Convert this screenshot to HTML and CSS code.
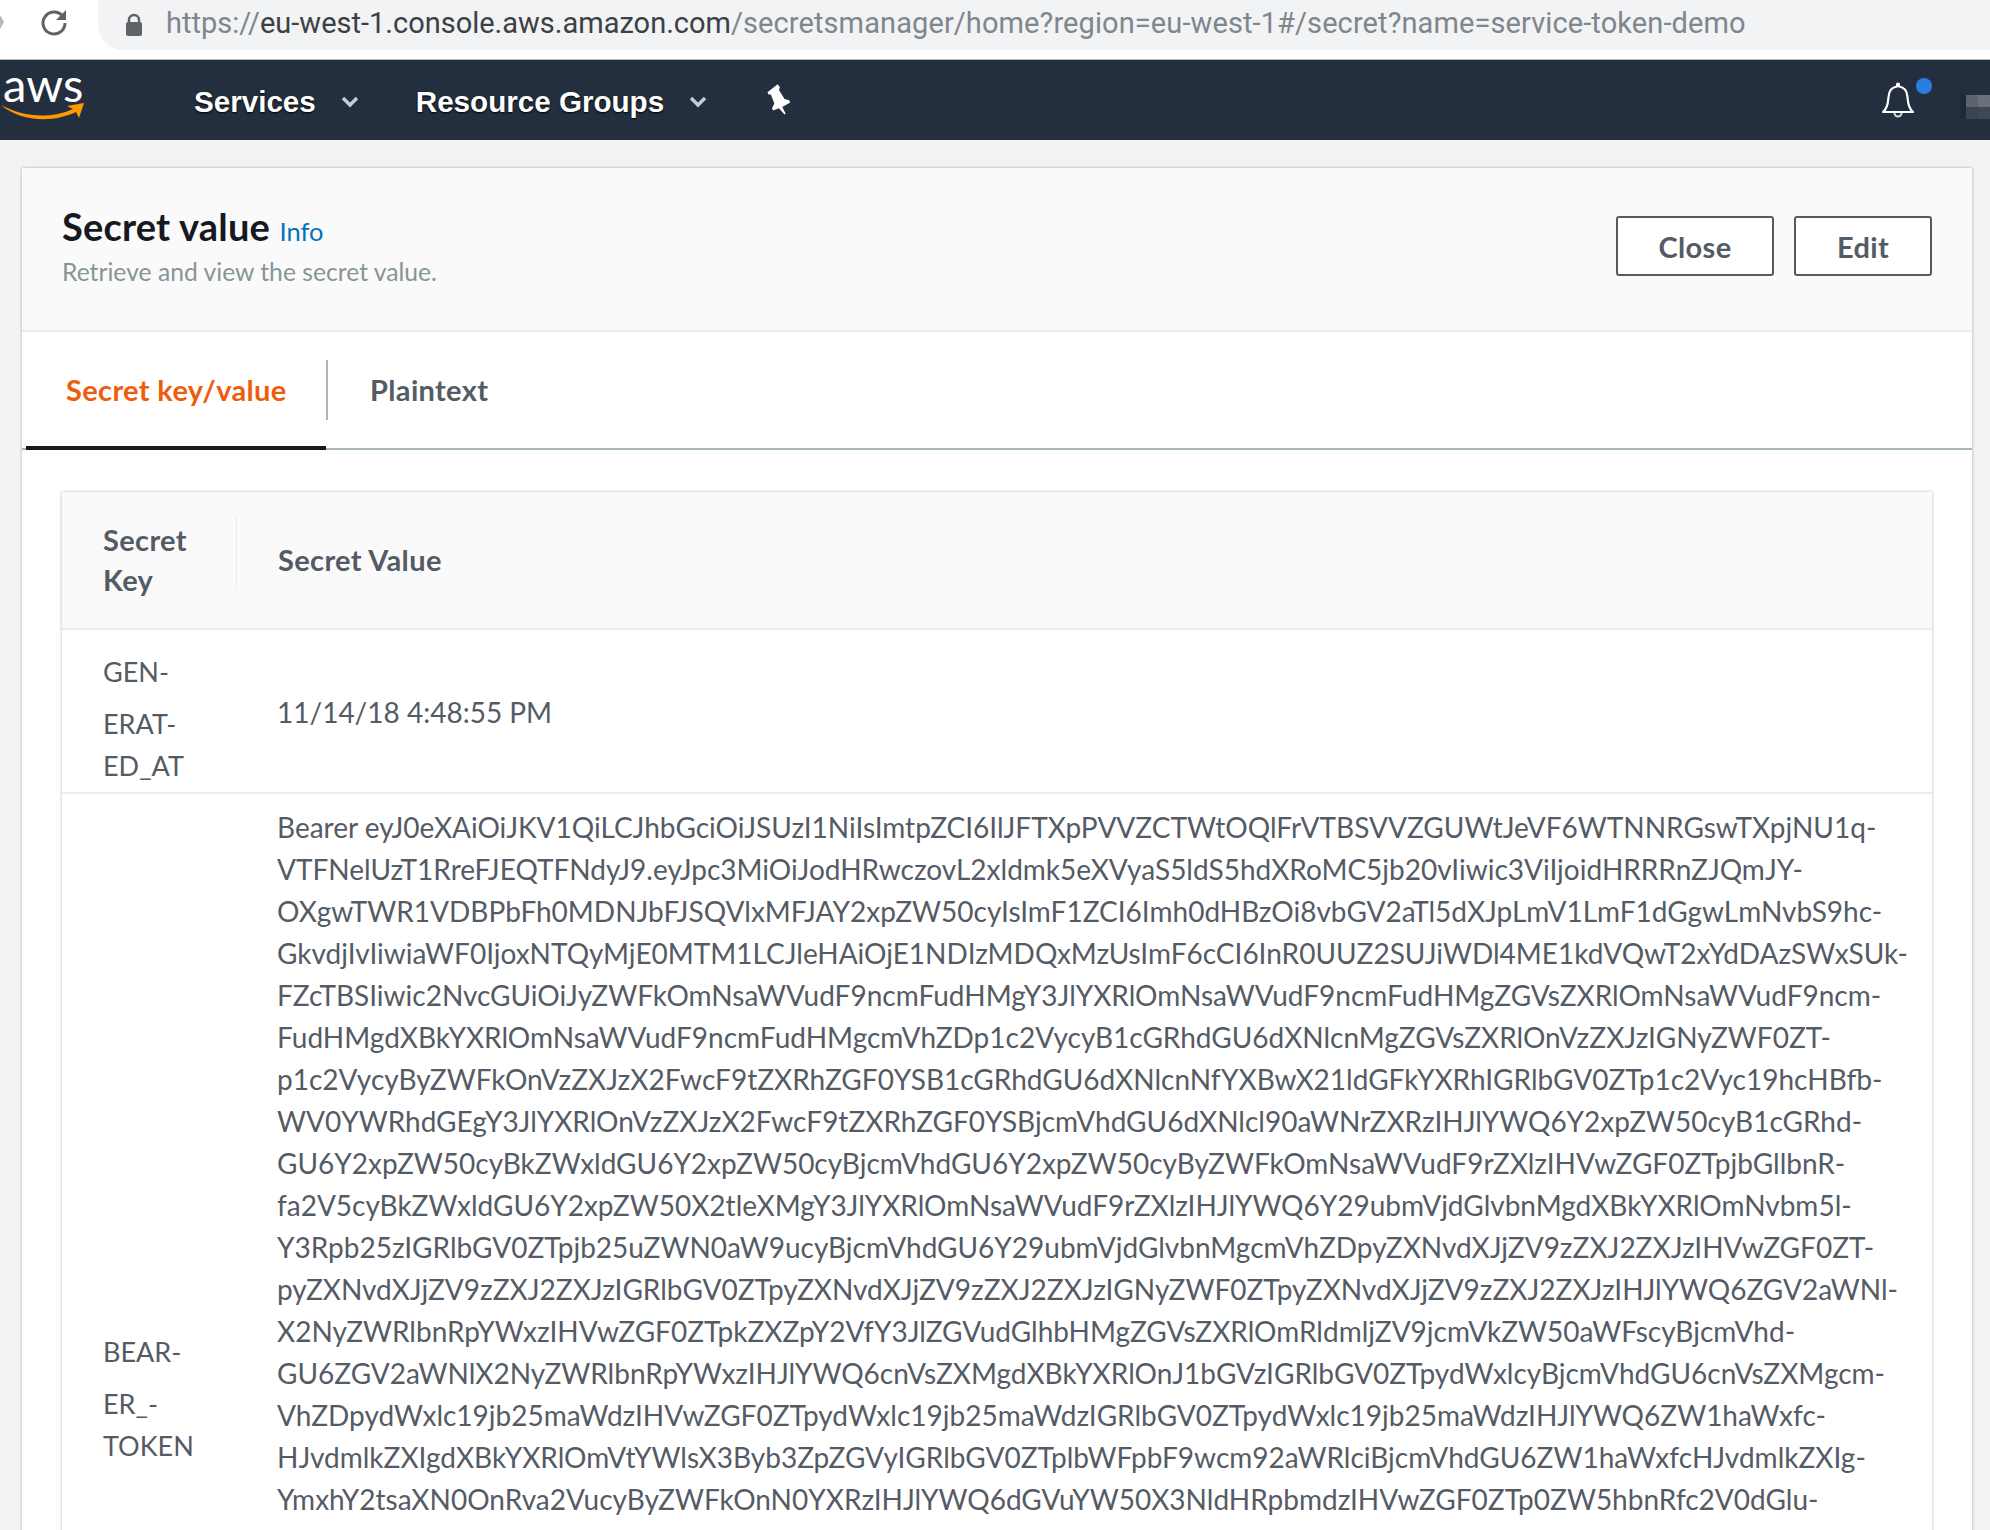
FILE: index.html
```html
<!DOCTYPE html>
<html lang="en">
<head>
    <meta charset="UTF-8">
    <meta name="viewport" content="width=device-width, initial-scale=1.0">
    <title>Secret value</title>
    <link rel="stylesheet" href="styles.css">
</head>
<body>
    <!-- browser toolbar -->
    <div class="toolbar">
        <svg class="back-stub" width="4" height="14" viewBox="0 0 4 14"><path d="M0 0 L4 7 L0 14 Z" fill="#b5b7ba"/></svg>
        <svg class="reload" width="30" height="30" viewBox="0 0 30 30">
            <path d="M24.5 10.5 A11 11 0 1 0 26 16" fill="none" stroke="#5f6368" stroke-width="3"/>
            <path d="M27 3 L27 13 L17 13 Z" fill="#5f6368"/>
        </svg>
        <div class="url-bar">
            <svg class="lock" width="18" height="24" viewBox="0 0 18 24">
                <path d="M4 10 V7 A5 5 0 0 1 14 7 V10" fill="none" stroke="#5f6368" stroke-width="2.4"/>
                <rect x="1" y="9" width="16" height="14" rx="2" fill="#5f6368"/>
            </svg>
            <span class="url"><span class="url-host"><span class="url-scheme">https://</span>eu-west-1.console.aws.amazon.com</span>/secretsmanager/home?region=eu-west-1#/secret?name=service-token-demo</span>
        </div>
    </div>

    <!-- console nav -->
    <header class="nav">
        <div class="logo">
            <span class="logo-text">aws</span>
            <svg class="logo-smile" width="84" height="18" viewBox="0 0 84 18">
                <path d="M0 2 C20 13 48 17 72 6 L66 3 L83 0 L78 15 L75 9 C52 20 20 19 0 2 Z" fill="#f90"/>
            </svg>
        </div>
        <div class="nav-item">Services
            <svg class="caret" width="18" height="12" viewBox="0 0 18 12"><path d="M2 2 L9 9 L16 2" fill="none" stroke="#c9ccd0" stroke-width="3.4"/></svg>
        </div>
        <div class="nav-item">Resource Groups
            <svg class="caret" width="18" height="12" viewBox="0 0 18 12"><path d="M2 2 L9 9 L16 2" fill="none" stroke="#c9ccd0" stroke-width="3.4"/></svg>
        </div>
        <svg class="pin" width="30" height="32" viewBox="0 0 26 28">
            <path d="M2 8 L11 1 L13 4 L12 6 L17 14 L21 15 L22 17 L15 21 L18 27 L17 27.5 L12 22 L7 24 L6 22 L8 18 L5 10 L3 10 Z" fill="#fff"/>
        </svg>
        <div class="nav-right">
            <div class="bell-wrap">
                <svg width="34" height="36" viewBox="0 0 34 36">
                    <path d="M2 30 C7 26 7 20 7.500 15 C8 8 12 5 16 4.500 L16 2.500 A1 1 0 0 1 18 2.500 L18 4.500 C22 5 26 8 26.500 15 C27 20 27 26 32 30 Z" fill="none" stroke="#fff" stroke-width="2.200" stroke-linejoin="round"/>
                    <path d="M13.500 31 A3.500 3.500 0 0 0 20.500 31" fill="none" stroke="#d5dbdb" stroke-width="2"/>
                </svg>
                <span class="bell-dot"></span>
            </div>
            <div class="blurred-account">
                <span class="px px-a"></span><span class="px px-b"></span>
                <span class="px px-c"></span><span class="px px-d"></span>
            </div>
        </div>
    </header>

    <main class="page">
        <section class="card">
            <div class="card-head">
                <div>
                    <h1 class="card-title">Secret value <a class="info">Info</a></h1>
                    <p class="card-sub">Retrieve and view the secret value.</p>
                </div>
                <div class="actions">
                    <button class="btn btn-close">Close</button>
                    <button class="btn btn-edit">Edit</button>
                </div>
            </div>

            <div class="tabs">
                <div class="tab active">Secret key/value</div>
                <div class="tab">Plaintext</div>
            </div>

            <div class="table-wrap">
                <div class="secret-table">
                    <div class="row row-head">
                        <div class="cell-key th-key">Secret<br>Key</div>
                        <div class="cell-value th-value">Secret Value</div>
                    </div>
                    <div class="row row-date">
                        <div class="cell-key">
                            <span class="brk first">GEN-</span>
                            <span class="brk">ERAT-</span>
                            <span class="brk">ED_AT</span>
                        </div>
                        <div class="cell-value">11/14/18 4:48:55 PM</div>
                    </div>
                    <div class="row row-token">
                        <div class="cell-key">
                            <span class="brk first">BEAR-</span>
                            <span class="brk">ER_-</span>
                            <span class="brk">TOKEN</span>
                        </div>
                        <div class="cell-value token">
                            <span class="brk">Bearer eyJ0eXAiOiJKV1QiLCJhbGciOiJSUzI1NiIsImtpZCI6IlJFTXpPVVZCTWtOQlFrVTBSVVZGUWtJeVF6WTNNRGswTXpjNU1q-</span>
                            <span class="brk">VTFNelUzT1RreFJEQTFNdyJ9.eyJpc3MiOiJodHRwczovL2xldmk5eXVyaS5ldS5hdXRoMC5jb20vIiwic3ViIjoidHRRRnZJQmJY-</span>
                            <span class="brk">OXgwTWR1VDBPbFh0MDNJbFJSQVlxMFJAY2xpZW50cyIsImF1ZCI6Imh0dHBzOi8vbGV2aTl5dXJpLmV1LmF1dGgwLmNvbS9hc-</span>
                            <span class="brk">GkvdjIvIiwiaWF0IjoxNTQyMjE0MTM1LCJleHAiOjE1NDIzMDQxMzUsImF6cCI6InR0UUZ2SUJiWDl4ME1kdVQwT2xYdDAzSWxSUk-</span>
                            <span class="brk">FZcTBSIiwic2NvcGUiOiJyZWFkOmNsaWVudF9ncmFudHMgY3JlYXRlOmNsaWVudF9ncmFudHMgZGVsZXRlOmNsaWVudF9ncm-</span>
                            <span class="brk">FudHMgdXBkYXRlOmNsaWVudF9ncmFudHMgcmVhZDp1c2VycyB1cGRhdGU6dXNlcnMgZGVsZXRlOnVzZXJzIGNyZWF0ZT-</span>
                            <span class="brk">p1c2VycyByZWFkOnVzZXJzX2FwcF9tZXRhZGF0YSB1cGRhdGU6dXNlcnNfYXBwX21ldGFkYXRhIGRlbGV0ZTp1c2Vyc19hcHBfb-</span>
                            <span class="brk">WV0YWRhdGEgY3JlYXRlOnVzZXJzX2FwcF9tZXRhZGF0YSBjcmVhdGU6dXNlcl90aWNrZXRzIHJlYWQ6Y2xpZW50cyB1cGRhd-</span>
                            <span class="brk">GU6Y2xpZW50cyBkZWxldGU6Y2xpZW50cyBjcmVhdGU6Y2xpZW50cyByZWFkOmNsaWVudF9rZXlzIHVwZGF0ZTpjbGllbnR-</span>
                            <span class="brk">fa2V5cyBkZWxldGU6Y2xpZW50X2tleXMgY3JlYXRlOmNsaWVudF9rZXlzIHJlYWQ6Y29ubmVjdGlvbnMgdXBkYXRlOmNvbm5l-</span>
                            <span class="brk">Y3Rpb25zIGRlbGV0ZTpjb25uZWN0aW9ucyBjcmVhdGU6Y29ubmVjdGlvbnMgcmVhZDpyZXNvdXJjZV9zZXJ2ZXJzIHVwZGF0ZT-</span>
                            <span class="brk">pyZXNvdXJjZV9zZXJ2ZXJzIGRlbGV0ZTpyZXNvdXJjZV9zZXJ2ZXJzIGNyZWF0ZTpyZXNvdXJjZV9zZXJ2ZXJzIHJlYWQ6ZGV2aWNl-</span>
                            <span class="brk">X2NyZWRlbnRpYWxzIHVwZGF0ZTpkZXZpY2VfY3JlZGVudGlhbHMgZGVsZXRlOmRldmljZV9jcmVkZW50aWFscyBjcmVhd-</span>
                            <span class="brk">GU6ZGV2aWNlX2NyZWRlbnRpYWxzIHJlYWQ6cnVsZXMgdXBkYXRlOnJ1bGVzIGRlbGV0ZTpydWxlcyBjcmVhdGU6cnVsZXMgcm-</span>
                            <span class="brk">VhZDpydWxlc19jb25maWdzIHVwZGF0ZTpydWxlc19jb25maWdzIGRlbGV0ZTpydWxlc19jb25maWdzIHJlYWQ6ZW1haWxfc-</span>
                            <span class="brk">HJvdmlkZXIgdXBkYXRlOmVtYWlsX3Byb3ZpZGVyIGRlbGV0ZTplbWFpbF9wcm92aWRlciBjcmVhdGU6ZW1haWxfcHJvdmlkZXIg-</span>
                            <span class="brk">YmxhY2tsaXN0OnRva2VucyByZWFkOnN0YXRzIHJlYWQ6dGVuYW50X3NldHRpbmdzIHVwZGF0ZTp0ZW5hbnRfc2V0dGlu-</span>
                            <span class="brk">Z3MgcmVhZDpsb2dzIHJlYWQ6c2hpZWxkcyBjcmVhdGU6c2hpZWxkcyBkZWxldGU6c2hpZWxkcyB1cGRhdGU6dHJpZ2dlcnMg-</span>
                        </div>
                    </div>
                </div>
            </div>
        </section>
    </main>
</body>
</html>
```

FILE: styles.css
```css
/* Reset and Base Styles */
* {
    margin: 0;
    padding: 0;
    box-sizing: border-box;
}

html, body {
    height: 1530px;
    overflow: hidden;
}

body {
    background-color: #f2f3f3;
    color: #545b64;
    font-family: "Lato", "Liberation Sans", sans-serif;
}

/* Browser toolbar */
.toolbar {
    display: flex;
    align-items: flex-start;
    height: 60px;
    background-color: #fff;
    border-bottom: 1px solid #b8b8b8;
}

.back-stub {
    margin-top: 15px;
    flex: none;
}

.reload {
    margin: 7px 0 0 35px;
    flex: none;
}

.url-bar {
    display: flex;
    align-items: center;
    flex: 1;
    height: 50px;
    margin-left: 29px;
    padding-left: 27px;
    background-color: #f1f3f4;
    border-radius: 0 0 0 25px;
}

.lock {
    flex: none;
    margin-right: 23px;
}

.url {
    font-family: "Roboto", sans-serif;
    font-size: 29px;
    line-height: 46px;
    margin-bottom: 4px;
    letter-spacing: 0.1px;
    color: #80868b;
    white-space: nowrap;
}

.url-host {
    color: #3c4043;
    letter-spacing: 0;
}

.url-scheme {
    color: #80868b;
}

/* Console nav */
.nav {
    display: flex;
    align-items: center;
    height: 80px;
    background-color: #232f3e;
    color: #fff;
}

.logo {
    display: flex;
    flex-direction: column;
    flex: none;
    width: 194px;
    padding: 0 0 8px 1px;
}

.logo-text {
    font-size: 47px;
    line-height: 38px;
    padding-left: 2px;
    margin-top: -7px;
}

.logo-smile {
    display: block;
}

.nav-item {
    display: flex;
    align-items: center;
    padding-top: 4px;
    font-family: "Liberation Sans", sans-serif;
    font-size: 29.600px;
    font-weight: 700;
    text-shadow: 0 1px 2px #000;
    margin-right: 57px;
    white-space: nowrap;
}

.caret {
    margin-left: 25px;
}

.pin {
    margin-left: 1px;
    margin-top: -2px;
}

.nav-right {
    display: flex;
    align-items: center;
    margin-left: auto;
}

.bell-wrap {
    position: relative;
    display: flex;
    margin-right: 45px;
}

.bell-dot {
    position: absolute;
    top: -4px;
    left: 35px;
    width: 16px;
    height: 16px;
    background-color: #2b7de0;
    border-radius: 50%;
}

.blurred-account {
    display: grid;
    grid-template-columns: 12px 12px;
    grid-auto-rows: 12px;
    width: 30px;
    padding-left: 6px;
    margin-top: 14px;
    background-color: #1f2a38;
}

.px-a { background-color: #5c636c; }
.px-b { background-color: #6a7179; }
.px-c { background-color: #3b4450; }
.px-d { background-color: #3f4854; }

/* Card */
.page {
    padding: 28px 18px 0 22px;
}

.card {
    background-color: #fff;
    box-shadow: 0 0 3px rgba(0,0,0,0.3);
}

.card-head {
    display: flex;
    justify-content: space-between;
    align-items: flex-start;
    height: 164px;
    padding: 37px 40px 0 40px;
    background-color: #fafafa;
    border-bottom: 2px solid #eaeded;
}

.card-title {
    font-size: 38px;
    line-height: 42px;
    font-weight: 700;
    letter-spacing: 0.2px;
    color: #16191f;
}

.info {
    font-size: 25.500px;
    font-weight: 400;
    letter-spacing: 0;
    color: #0073bb;
}

.card-sub {
    margin-top: 4px;
    font-size: 24.700px;
    line-height: 32px;
    color: #879596;
}

.actions {
    display: flex;
    gap: 20px;
    margin-top: 11px;
}

.btn {
    height: 60px;
    background-color: #fff;
    border: 2px solid #545b64;
    border-radius: 3px;
    font-family: inherit;
    font-size: 29px;
    font-weight: 700;
    letter-spacing: 0.35px;
    color: #545b64;
}

.btn-close { width: 158px; }
.btn-edit { width: 138px; }

/* Tabs */
.tabs {
    display: flex;
    height: 118px;
    padding: 0 0 0 4px;
    border-bottom: 2px solid #aab7b8;
}

.tab {
    position: relative;
    padding: 0 0 0 44px;
    height: 118px;
    line-height: 116px;
    font-size: 29px;
    font-weight: 700;
    letter-spacing: 0.35px;
}

.tab.active {
    width: 300px;
    padding-left: 40px;
    color: #ec5e0b;
    border-bottom: 4px solid #16191f;
}

.tab.active::after {
    content: "";
    position: absolute;
    top: 28px;
    right: -2px;
    width: 2px;
    height: 60px;
    background-color: #aab7b8;
}

/* Table */
.table-wrap {
    padding: 42px 40px 0 40px;
}

.secret-table {
    box-shadow: 0 0 3px rgba(0,0,0,0.3);
}

.row {
    display: grid;
    grid-template-columns: 175px 1fr;
    align-items: center;
    font-size: 27px;
    border-bottom: 2px solid #eaeded;
}

.row-head {
    height: 138px;
    background-color: #fafafa;
    font-size: 29px;
    font-weight: 700;
    letter-spacing: 0.35px;
    line-height: 40px;
}

.th-key {
    position: relative;
    height: 70px;
    line-height: 40px;
    margin-top: -10px;
}

.th-key::after {
    content: "";
    position: absolute;
    top: -5px;
    right: 0;
    width: 1px;
    height: 75px;
    background-color: #eaeded;
}

.cell-key {
    padding-left: 41px;
}

.cell-value {
    padding-left: 40px;
    font-size: 28px;
}

.th-value {
    font-size: 29px;
    padding-left: 41px;
}

.row-date {
    height: 164px;
}

.row-date .cell-key {
    padding-top: 15px;
}

.row-date .cell-value {
    padding-top: 2px;
}

.row-token {
    align-items: start;
    min-height: 1210px;
    border-bottom: none;
}

.row-token .cell-key {
    align-self: center;
}

.brk {
    display: block;
    white-space: nowrap;
    line-height: 42px;
}

.brk.first {
    margin-bottom: 10px;
}

.token {
    padding-top: 12px;
}

@media (max-width: 768px) {
    .page {
        padding: 10px;
    }
}
```
